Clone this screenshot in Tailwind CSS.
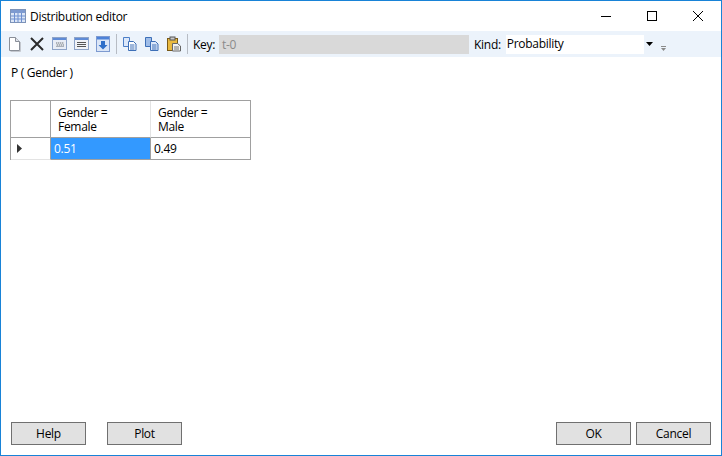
<!doctype html>
<html><head><meta charset="utf-8"><script src="https://cdn.jsdelivr.net/npm/@tailwindcss/browser@4"></script></head>
<body class="m-0 overflow-hidden bg-white">
<div class="w-[722px] h-[456px] border border-[#1883d7] bg-white flex flex-col text-[12px] leading-[15px] text-[#000] font-['Open_Sans','Noto_Sans',sans-serif] tracking-[-0.3px]">
  <div class="h-[30px] flex items-center shrink-0">
    <svg class="ml-[8px] w-[18px] h-[16px]" viewBox="0 0 18 16"><rect x="1.5" y="1.5" width="15" height="13" fill="#dce6f6" stroke="#7d93b8"/><rect x="2" y="2" width="14" height="3" fill="#7d9ad0"/><path d="M2 8h14M2 11h14M5.5 5v9M9 5v9M12.5 5v9" stroke="#6d8fd0" fill="none"/></svg>
    <span class="ml-[3px]">Distribution editor</span>
    <div class="ml-auto flex items-center">
      <svg class="w-[46px] h-[30px]" viewBox="0 0 46 30"><path d="M18 15.500h10" stroke="#000"/></svg>
      <svg class="w-[46px] h-[30px]" viewBox="0 0 46 30"><rect x="18.500" y="10.500" width="9" height="9" fill="none" stroke="#000"/></svg>
      <svg class="w-[46px] h-[30px]" viewBox="0 0 46 30"><path d="M18 10l10 10M28 10l-10 10" stroke="#000" fill="none"/></svg>
    </div>
  </div>
  <div class="h-[26px] bg-[#ecf3fb] flex items-center shrink-0 pl-[7px] relative">
    <svg class="w-[14px] h-[16px]" viewBox="0 0 14 16"><path d="M1.500 1.500h6l4 4v9h-10z" fill="#fff" stroke="#8a8f98"/><path d="M7.500 1.500v4h4" fill="#dfe3ea" stroke="#8a8f98"/><path d="M12.500 6v9.500h-10" stroke="#c4c8cf" fill="none"/></svg>
    <svg class="ml-[8px] w-[14px] h-[14px]" viewBox="0 0 14 14"><path d="M1 1l12 12M13 1l-12 12" stroke="#2b2b2b" stroke-width="2" fill="none"/></svg>
    <svg class="ml-[8px] w-[15px] h-[14px]" viewBox="0 0 15 14"><rect x=".5" y=".5" width="14" height="12" fill="#e8edf6" stroke="#8ea4c8"/><rect x="1" y="1" width="13" height="2" fill="#5f8bd6"/><path d="M4 5h8v5h-8z" fill="#aab0b8"/><path d="M5 6h1M7 6h1M9 6h1M11 6h1M4 8h1M6 8h1M8 8h1M10 8h1" stroke="#fff"/></svg>
    <svg class="ml-[7px] w-[15px] h-[14px]" viewBox="0 0 15 14"><rect x=".5" y=".5" width="14" height="12" fill="#f0f3f8" stroke="#8ea4c8"/><rect x="1" y="1" width="13" height="2" fill="#5f8bd6"/><path d="M3 5.500h9M3 7.500h9M3 9.500h9" stroke="#555" fill="none"/></svg>
    <svg class="ml-[7px] w-[14px] h-[16px]" viewBox="0 0 14 16"><rect x=".5" y=".5" width="13" height="15" fill="#dbe6f7" stroke="#7d9ad0"/><rect x="1" y="1" width="12" height="2.500" fill="#4d82d8"/><path d="M5 5h4v4h2.500l-4.500 4.500-4.500-4.500h2.500z" fill="#2f6fc9"/></svg>
    <div class="ml-[6px] w-px h-[20px] bg-[#b7bcc4]"></div>
    <svg class="ml-[5px] w-[16px] h-[16px]" viewBox="0 0 16 16"><path d="M1.500 1.500h6v9h-6z" fill="#dce8fa" stroke="#4d7fc7"/><path d="M6.500 5.500h5l2.500 2.500v6.500h-7.500z" fill="#fff" stroke="#3d6fb7"/><path d="M8 9h4.500M8 11h4.500M8 13h4.500" stroke="#3d6fb7"/></svg>
    <svg class="ml-[6px] w-[16px] h-[16px]" viewBox="0 0 16 16"><path d="M1.500 1.500h6v9h-6z" fill="#9fbde8" stroke="#3d6fb7"/><path d="M6.500 5.500h5l2.500 2.500v6.500h-7.500z" fill="#dce8fa" stroke="#3d6fb7"/><path d="M8 9h4.500M8 11h4.500M8 13h4.500" stroke="#3d6fb7"/></svg>
    <svg class="ml-[6px] w-[16px] h-[16px]" viewBox="0 0 16 16"><rect x="1.500" y="2.500" width="10" height="12" fill="#e9b93f" stroke="#7a5a18"/><rect x="4" y="1" width="5" height="3" fill="#c9c9c9" stroke="#555"/><path d="M6.500 7.500h5l3 2.500v5h-8z" fill="#f1f1f1" stroke="#666"/><path d="M8 11h5M8 13h5" stroke="#777"/></svg>
    <div class="ml-[5px] w-px h-[20px] bg-[#b7bcc4]"></div>
    <span class="ml-[5px]">Key:</span>
    <div class="ml-[4px] w-[250px] h-[19px] bg-[#d9d9d9] text-[#8b8b8b] pl-[3px] flex items-center">t-0</div>
    <span class="ml-[5px]">Kind:</span>
    <div class="ml-[5px] w-[150px] h-[19px] bg-white pl-[1px] pb-[1px] flex items-center relative">Probability
      <div class="absolute right-0 top-0 w-[12px] h-[19px] bg-[#ecf3fb] flex items-center justify-center"><svg class="w-[7px] h-[4px]" viewBox="0 0 7 4"><path d="M0 0h7l-3.500 4z" fill="#000"/></svg></div>
    </div>
    <svg class="ml-[4px] mt-[9px] w-[7px] h-[6px]" viewBox="0 0 7 6"><path d="M1 .5h5" stroke="#8a8a8a"/><path d="M1 2h5l-2.500 3z" fill="#8a8a8a"/></svg>
  </div>
  <div class="flex-1 flex flex-col px-[10px] min-h-0">
    <div class="pt-[8px] h-[43px]">P ( Gender )</div>
    <div class="-ml-px grid grid-cols-[40px_100px_100px] grid-rows-[37px_22px] w-[241px] h-[60px] border-l border-t border-[#a0a0a0] bg-white">
      <div class="border-r border-b border-[#a0a0a0]"></div>
      <div class="border-r border-b border-r-[#e3e3e3] border-b-[#a0a0a0] pl-[7px] pt-[5px] leading-[14px]">Gender =<br>Female</div>
      <div class="border-r border-b border-[#a0a0a0] pl-[7px] pt-[5px] leading-[14px]">Gender =<br>Male</div>
      <div class="border-r border-b border-r-[#a0a0a0] border-b-[#e3e3e3] flex items-center pl-[6px]"><svg class="w-[5px] h-[9px]" viewBox="0 0 5 9"><path d="M0 0l5 4.500-5 4.500z" fill="#333"/></svg></div>
      <div class="border-r border-b border-[#a0a0a0] bg-[#3399ff] text-white pl-[3px] flex items-center">0.51</div>
      <div class="border-r border-b border-[#a0a0a0] pl-[3px] flex items-center">0.49</div>
    </div>
    <div class="mt-auto pb-[10px] flex">
      <button class="w-[75px] h-[23px] bg-[#e1e1e1] border border-[#707070] flex items-center justify-center">Help</button>
      <button class="ml-[21px] w-[75px] h-[23px] bg-[#e1e1e1] border border-[#707070] flex items-center justify-center">Plot</button>
      <button class="ml-auto w-[75px] h-[23px] bg-[#e1e1e1] border border-[#707070] flex items-center justify-center">OK</button>
      <button class="ml-[5px] w-[75px] h-[23px] bg-[#e1e1e1] border border-[#707070] flex items-center justify-center">Cancel</button>
    </div>
  </div>
</div>
</body></html>
